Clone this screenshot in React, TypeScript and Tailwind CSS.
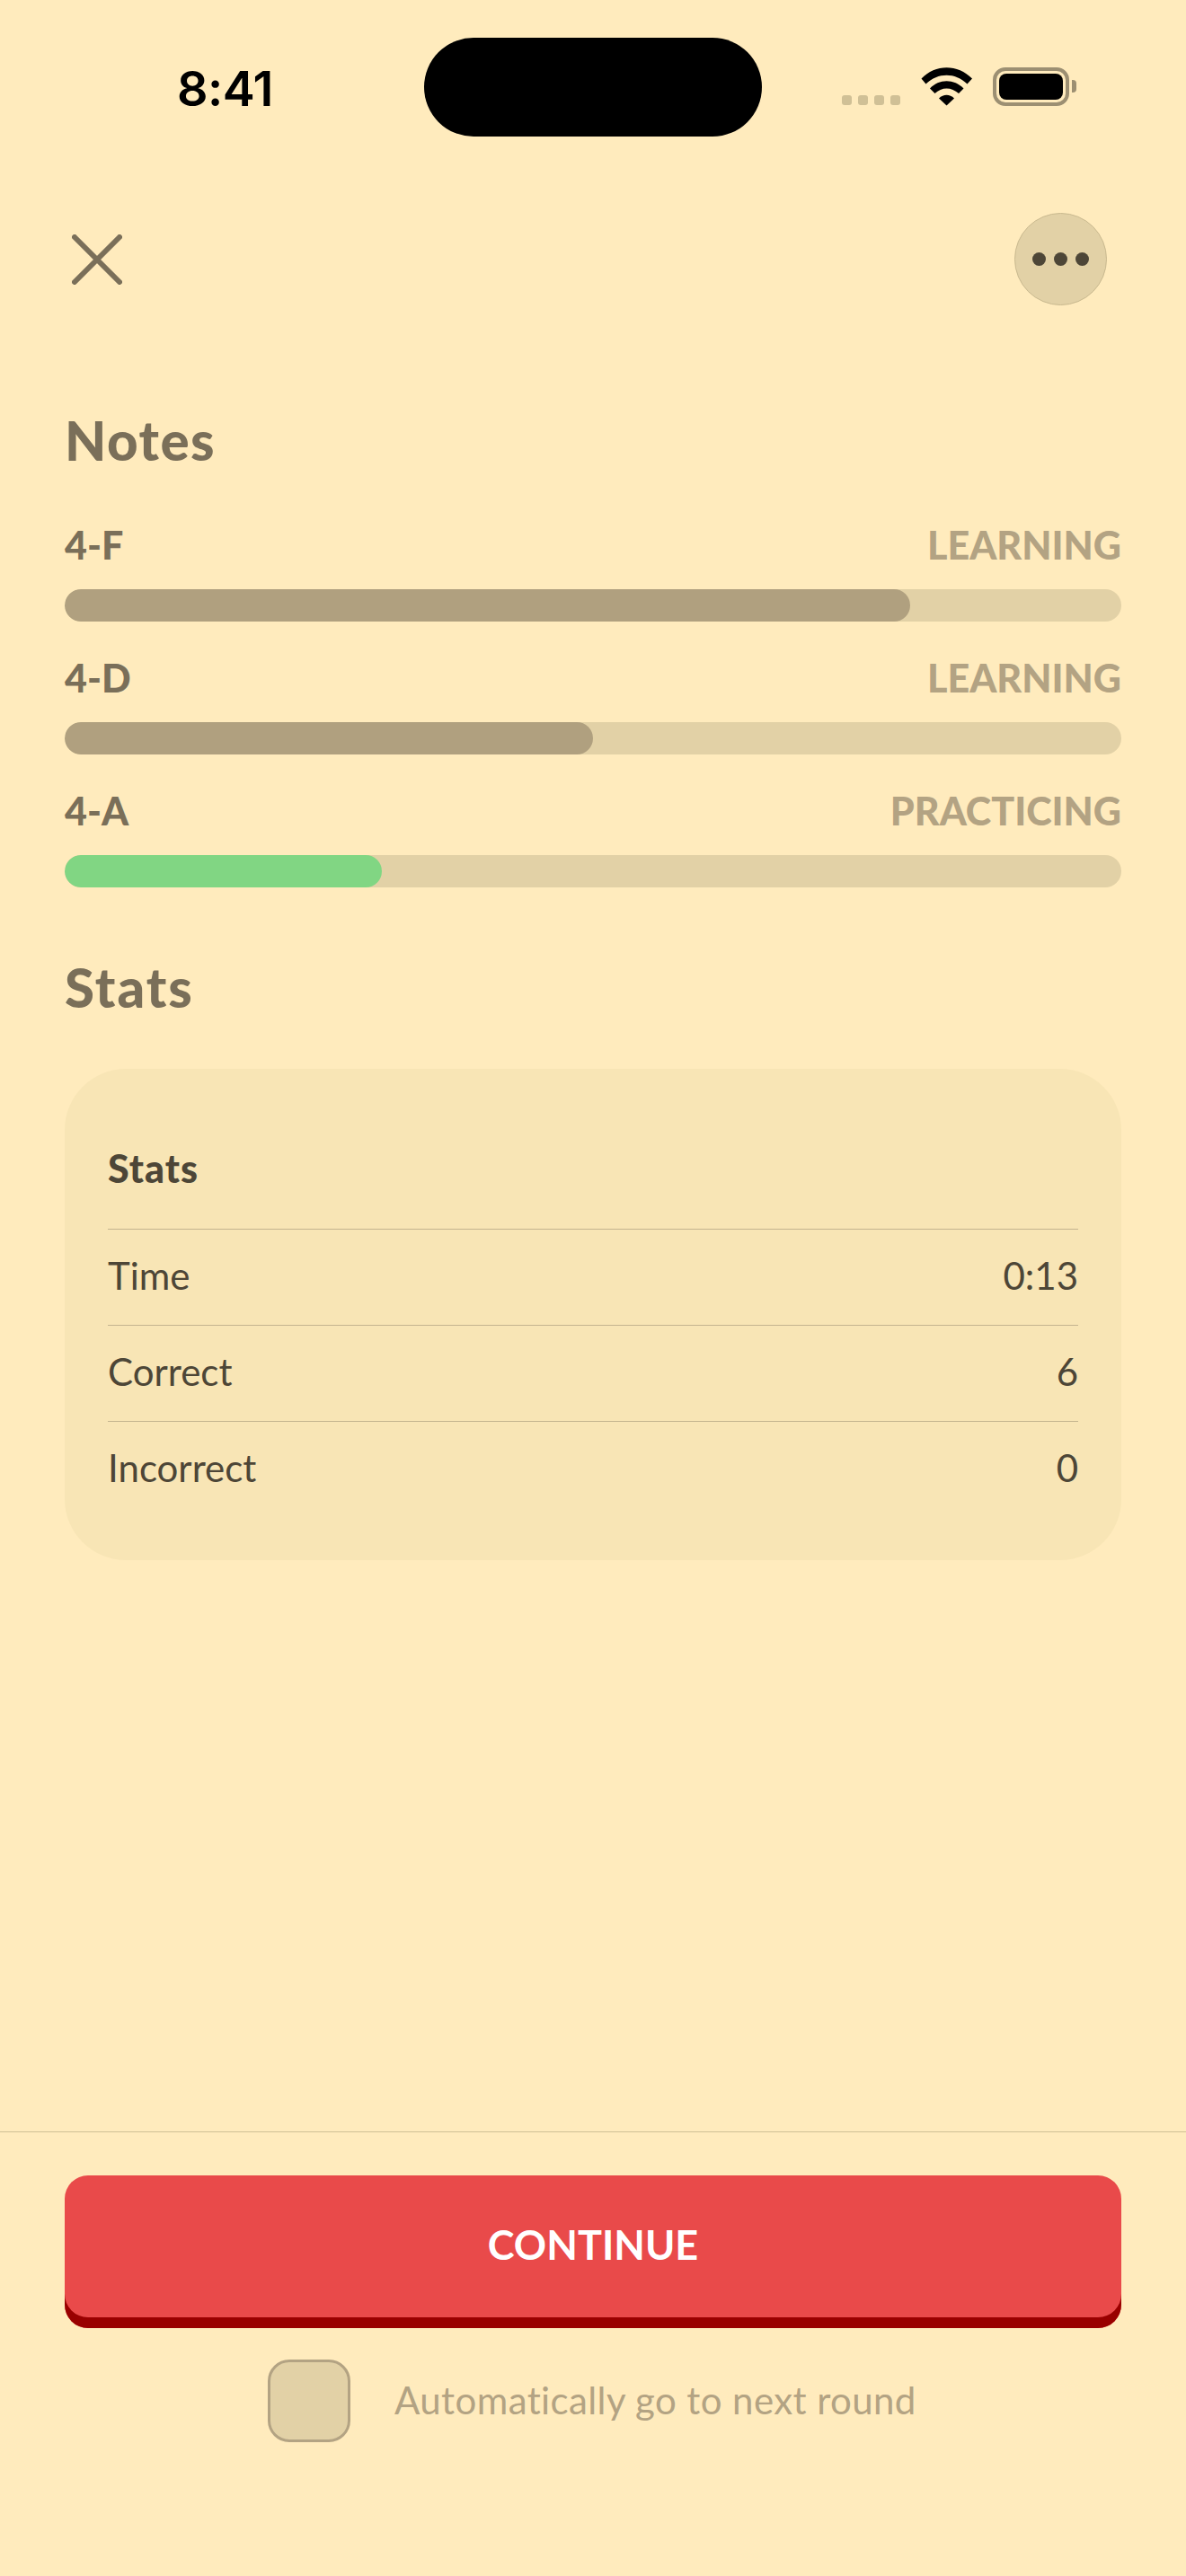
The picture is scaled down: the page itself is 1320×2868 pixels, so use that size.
const font = "font-['Lato','Noto_Sans',sans-serif]";

const notes = [
  { name: '4-F', status: 'LEARNING', fill: 'w-[80%]', color: 'bg-[#b0a07f]' },
  { name: '4-D', status: 'LEARNING', fill: 'w-[50%]', color: 'bg-[#b0a07f]' },
  { name: '4-A', status: 'PRACTICING', fill: 'w-[30%]', color: 'bg-[#81d683]' },
];

const stats = [
  { label: 'Time', value: '0:13' },
  { label: 'Correct', value: '6' },
  { label: 'Incorrect', value: '0' },
];

function StatusBar() {
  return (
    <div className="flex h-[152px] items-start pt-[42px]">
      <div className="mt-[30px] w-[472px] pl-[197px] font-['Inter',sans-serif] text-[54px] leading-[54px] font-semibold tracking-[-0.5px] text-black">8:41</div>
      <div className="h-[110px] w-[376px] rounded-[55px] bg-black" />
      <div className="mt-[33px] ml-[89px] flex items-start">
        <div className="mt-[31px] flex gap-[7px]">
          <div className="h-[11px] w-[11px] rounded-[3px] bg-[#d0c096]" />
          <div className="h-[11px] w-[11px] rounded-[3px] bg-[#d0c096]" />
          <div className="h-[11px] w-[11px] rounded-[3px] bg-[#d0c096]" />
          <div className="h-[11px] w-[11px] rounded-[3px] bg-[#d0c096]" />
        </div>
        <svg className="ml-[23px]" width="57" height="43" viewBox="0 0 57 43" fill="#000">
          <path d="M0.5 12.5C16 -4 41 -4 57 12.5L51.5 18.5C38 5.5 19 5.5 5.5 18.5Z" />
          <path d="M10 23.5C20 12.5 37 12.5 47.5 23.5L42 29C34 21.5 23 21.5 15.5 29Z" />
          <path d="M20 34.5C25 29.5 32 29.5 37 34.5L28.5 42.5Z" />
        </svg>
        <div className="ml-[23px] flex h-[43px] w-[85px] items-center justify-center rounded-[14px] border-[4px] border-[#9c8f72]">
          <div className="h-[29px] w-[71px] rounded-[8px] bg-black" />
        </div>
        <div className="mt-[14px] ml-[3px] h-[14px] w-[5px] rounded-r-[4px] bg-[#9c8f72]" />
      </div>
    </div>
  );
}

function Header() {
  return (
    <div className="mt-[85px] flex items-center justify-between pr-[88px] pl-[80px]">
      <svg width="56" height="56" viewBox="0 0 56 56" fill="none" stroke="#7a6f59" strokeWidth="6" strokeLinecap="round">
        <path d="M3 3L53 53M53 3L3 53" />
      </svg>
      <div className="flex h-[103px] w-[103px] items-center justify-center gap-[9px] rounded-full border border-[#c9b98f] bg-[#e2d1a6]">
        <div className="h-[15px] w-[15px] rounded-full bg-[#4d4637]" />
        <div className="h-[15px] w-[15px] rounded-full bg-[#4d4637]" />
        <div className="h-[15px] w-[15px] rounded-full bg-[#4d4637]" />
      </div>
    </div>
  );
}

function NoteRow({ name, status, fill, color }: { name: string; status: string; fill: string; color: string }) {
  return (
    <div>
      <div className="flex h-[36px] items-center justify-between text-[43px] font-black">
        <span className="text-[#7a6f59]">{name}</span>
        <span className="text-[#b3a383]">{status}</span>
      </div>
      <div className="mt-[31px] h-[36px] overflow-hidden rounded-[18px] bg-[#e2d1a6]">
        <div className={`h-full rounded-[18px] ${fill} ${color}`} />
      </div>
    </div>
  );
}

function StatRow({ label, value }: { label: string; value: string }) {
  return (
    <div className="flex h-[107px] items-center justify-between border-t border-[#c4b48f] pb-[4px] text-[42px] text-[#4d4637]">
      <span>{label}</span>
      <span>{value}</span>
    </div>
  );
}

export default function App() {
  return (
    <div className={`flex h-[2868px] w-[1320px] flex-col bg-[#ffebbd] ${font} [font-variant-ligatures:none]`}>
      <StatusBar />
      <Header />

      <div className="mt-[120px] px-[72px]">
        <h2 className="h-[60px] text-[60px] leading-[60px] font-black tracking-[1.5px] text-[#7a6f59]">Notes</h2>
        <div className="mt-[69px] flex flex-col gap-[45px]">
          {notes.map((n) => (
            <NoteRow key={n.name} {...n} />
          ))}
        </div>

        <h2 className="mt-[81px] h-[60px] text-[60px] leading-[60px] font-black tracking-[2px] text-[#7a6f59]">Stats</h2>

        <div className="mt-[61px] h-[547px] rounded-[68px] bg-[#f8e5b5] px-[48px] pt-[86px]">
          <div className="h-[92px] text-[43px] leading-[50px] font-black tracking-[1px] text-[#4d4637]">Stats</div>
          {stats.map((s) => (
            <StatRow key={s.label} {...s} />
          ))}
        </div>
      </div>

      <div className="mt-auto h-[495px] border-t border-[#d0c096] px-[72px] pt-[48px]">
        <button className="flex h-[170px] w-full items-center justify-center rounded-[26px] bg-[#e94a4a] pb-[14px] text-[45px] font-bold text-white shadow-[inset_0_-12px_0_#990000]">
          CONTINUE
        </button>
        <div className="mt-[35px] flex items-center pl-[226px]">
          <div className="h-[92px] w-[92px] rounded-[24px] border-[3px] border-[#b3a383] bg-[#e2d1a6]" />
          <span className="mb-[2px] ml-[49px] text-[42px] tracking-[0.4px] text-[#b3a383]">Automatically go to next round</span>
        </div>
      </div>
    </div>
  );
}
